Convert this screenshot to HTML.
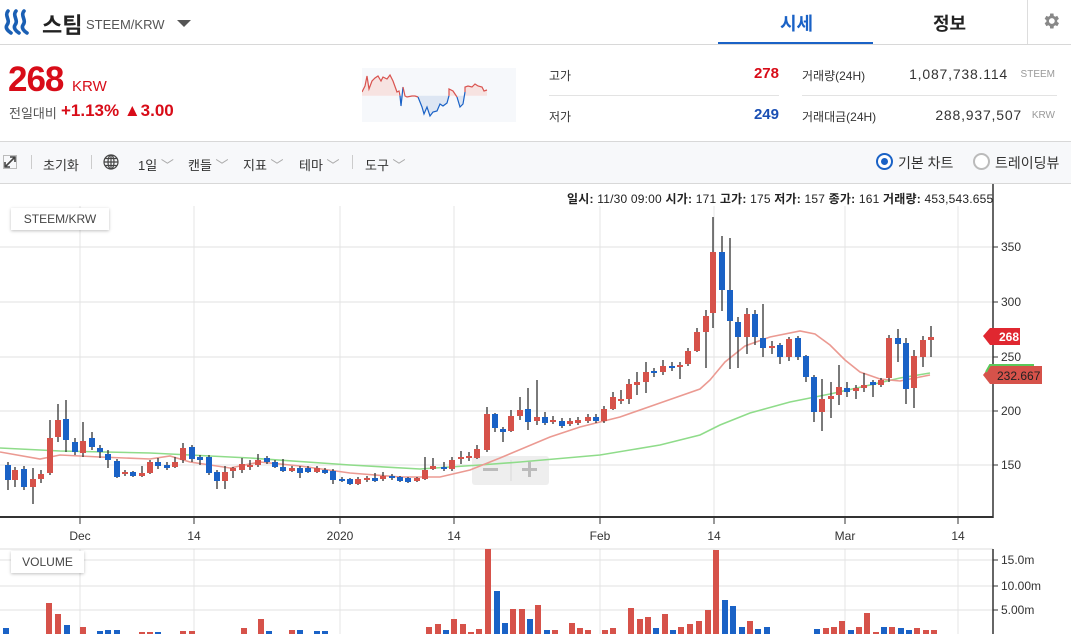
<!DOCTYPE html>
<html><head><meta charset="utf-8">
<style>
*{margin:0;padding:0;box-sizing:border-box}
body{width:1071px;height:634px;overflow:hidden;background:#fff;font-family:"Liberation Sans","Noto Sans CJK KR",sans-serif;color:#222;position:relative}
.a{position:absolute;white-space:nowrap}
</style></head><body>
<svg class="a" style="left:3px;top:8px" width="32" height="28" viewBox="0 0 32 28">
<g fill="none" stroke="#1a5fb4" stroke-width="3.6" stroke-linecap="round">
<path d="M5 3 C1 8 8 12 4 17 C2 20 5 23 8 25"/>
<path d="M13 3 C9 8 16 12 12 17 C10 20 13 23 16 25"/>
<path d="M21 3 C17 8 24 12 20 17 C18 20 21 23 24 25"/>
</g></svg>
<div class="a" style="left:42px;top:8px;font-size:22px;font-weight:bold;color:#222">스팀</div>
<div class="a" style="left:86px;top:17px;font-size:13px;color:#555">STEEM/KRW</div>
<div class="a" style="left:177px;top:20px;width:0;height:0;border-left:7px solid transparent;border-right:7px solid transparent;border-top:7px solid #555"></div>
<div class="a" style="left:780px;top:10px;font-size:18px;font-weight:bold;color:#1a62c6">시세</div>
<div class="a" style="left:933px;top:10px;font-size:18px;font-weight:bold;color:#222">정보</div>
<div class="a" style="left:718px;top:42px;width:155px;height:3px;background:#1a62c6"></div>
<div class="a" style="left:1027px;top:0;width:1px;height:44px;background:#ddd"></div>
<svg class="a" style="left:1041px;top:11px" width="20" height="20" viewBox="0 0 24 24"><path fill="#888" d="M19.4 13a7.5 7.5 0 0 0 0-2l2.1-1.6-2-3.5-2.5 1a7.5 7.5 0 0 0-1.7-1L15 3h-4l-.4 2.9a7.5 7.5 0 0 0-1.7 1l-2.5-1-2 3.5L6.5 11a7.5 7.5 0 0 0 0 2l-2.1 1.6 2 3.5 2.5-1a7.5 7.5 0 0 0 1.7 1L11 21h4l.4-2.9a7.5 7.5 0 0 0 1.7-1l2.5 1 2-3.5zM13 15.5a3.5 3.5 0 1 1 0-7 3.5 3.5 0 0 1 0 7z"/></svg>
<div class="a" style="left:0;top:44px;width:1071px;height:1px;background:#d8d8d8"></div>
<div class="a" style="left:8px;top:60px;font-size:35px;font-weight:bold;color:#d80c18;letter-spacing:-1px">268</div>
<div class="a" style="left:72px;top:78px;font-size:15px;color:#d80c18">KRW</div>
<div class="a" style="left:9px;top:103px;font-size:13px;color:#555">전일대비</div>
<div class="a" style="left:61px;top:101px;font-size:17px;font-weight:bold;color:#d80c18">+1.13% ▲3.00</div>
<svg class="a" style="left:362px;top:68px" width="154" height="54">
<rect width="154" height="54" fill="#f6f8fb"/>
<g transform="translate(-362,-68)">
<polygon points="362,92 365,86 367,76 369,89 372,81 375,78 378,76 381,81 383,77 387,79 390,75 393,81 397,92 399,95.7 362,95.7" fill="#f7e3e1"/>
<polygon points="449,95.7 449,89 453,91 457,95.7" fill="#f7e3e1"/>
<polygon points="465,95.7 465,87 468,86 472,87 475,84 478,86 482,87 484,91 487,90 487,95.7" fill="#f7e3e1"/>
<polygon points="399,95.7 401,106 403,95.7 405,96 407,97 412,96 415,96 418,97 422,107 424,114 427,107 430,116 433,112 437,111 440,104 443,106 447,103 449,95.7" fill="#dde6f3"/>
<polygon points="457,95.7 460,107 463,104 465,95.7" fill="#dde6f3"/>
<polyline points="362,92 365,86 367,76 369,89 372,81 375,78 378,76 381,81 383,77 387,79 390,75 393,81 397,92 399,91 400,95.7" fill="none" stroke="#d9534f" stroke-width="1.2"/>
<polyline points="400,95.7 401,106 403,87" fill="none" stroke="#1a62c6" stroke-width="1.2"/>
<polyline points="403,87 405,96 407,97 412,96 415,96 418,97" fill="none" stroke="#d9534f" stroke-width="1.2"/>
<polyline points="418,97 422,107 424,114 427,107 430,116 433,112 437,111 440,104 443,106 447,103 449,95.7" fill="none" stroke="#1a62c6" stroke-width="1.2"/>
<polyline points="449,95.7 449,89 453,91 457,97" fill="none" stroke="#d9534f" stroke-width="1.2"/>
<polyline points="457,97 460,107 463,104 465,92" fill="none" stroke="#1a62c6" stroke-width="1.2"/>
<polyline points="465,92 465,87 468,86 472,87 475,84 478,86 482,87 484,91 487,90" fill="none" stroke="#d9534f" stroke-width="1.2"/>
</g></svg>
<div class="a" style="left:549px;top:67px;font-size:12px;color:#333">고가</div>
<div class="a" style="left:720px;top:65px;font-size:15px;font-weight:bold;color:#d80c18;width:59px;text-align:right">278</div>
<div class="a" style="left:549px;top:95px;width:230px;height:1px;background:#e3e3e3"></div>
<div class="a" style="left:549px;top:108px;font-size:12px;color:#333">저가</div>
<div class="a" style="left:720px;top:106px;font-size:15px;font-weight:bold;color:#1a4fb4;width:59px;text-align:right">249</div>
<div class="a" style="left:802px;top:67px;font-size:12px;color:#333">거래량(24H)</div>
<div class="a" style="left:860px;top:66px;font-size:14px;color:#333;width:148px;text-align:right;letter-spacing:0.8px">1,087,738.114</div>
<div class="a" style="left:1012px;top:69px;font-size:10px;color:#999;width:43px;text-align:right">STEEM</div>
<div class="a" style="left:802px;top:95px;width:255px;height:1px;background:#e3e3e3"></div>
<div class="a" style="left:802px;top:108px;font-size:12px;color:#333">거래대금(24H)</div>
<div class="a" style="left:860px;top:107px;font-size:14px;color:#333;width:162px;text-align:right;letter-spacing:0.8px">288,937,507</div>
<div class="a" style="left:1012px;top:110px;font-size:10px;color:#999;width:43px;text-align:right">KRW</div>
<div class="a" style="left:0;top:141px;width:1071px;height:43px;background:#f7f8fa;border-top:1px solid #d8d8d8;border-bottom:1px solid #d8d8d8"></div>
<svg class="a" style="left:3px;top:155px" width="14" height="14" viewBox="0 0 14 14"><rect x="0.5" y="0.5" width="13" height="13" fill="none" stroke="#bbb"/><path d="M2 12 L12 2 M7 2 H12 V7 M2 7 V12 H7" stroke="#444" stroke-width="1.6" fill="none"/></svg>
<div class="a" style="left:31px;top:155px;width:1px;height:14px;background:#ccc"></div>
<div class="a" style="left:43px;top:155px;font-size:13px;color:#333">초기화</div>
<div class="a" style="left:91px;top:155px;width:1px;height:14px;background:#ccc"></div>
<svg class="a" style="left:103px;top:154px" width="16" height="16" viewBox="0 0 16 16"><g fill="none" stroke="#444" stroke-width="1.2"><circle cx="8" cy="8" r="7"/><ellipse cx="8" cy="8" rx="3" ry="7"/><path d="M1 8H15M2.5 4.5H13.5M2.5 11.5H13.5M8 1V15"/></g></svg>
<div class="a" style="left:138px;top:155px;font-size:13px;color:#333">1일<span style="color:#aaa"> ﹀</span></div>
<div class="a" style="left:188px;top:155px;font-size:13px;color:#333">캔들<span style="color:#aaa"> ﹀</span></div>
<div class="a" style="left:243px;top:155px;font-size:13px;color:#333">지표<span style="color:#aaa"> ﹀</span></div>
<div class="a" style="left:299px;top:155px;font-size:13px;color:#333">테마<span style="color:#aaa"> ﹀</span></div>
<div class="a" style="left:352px;top:155px;width:1px;height:14px;background:#ccc"></div>
<div class="a" style="left:365px;top:155px;font-size:13px;color:#333">도구<span style="color:#aaa"> ﹀</span></div>
<div class="a" style="left:876px;top:153px;width:17px;height:17px;border-radius:50%;border:2px solid #1a62c6;background:#fff"></div>
<div class="a" style="left:881px;top:158px;width:7px;height:7px;border-radius:50%;background:#1a62c6"></div>
<div class="a" style="left:898px;top:153px;font-size:14px;color:#333">기본 차트</div>
<div class="a" style="left:973px;top:153px;width:17px;height:17px;border-radius:50%;border:2px solid #bbb;background:#fff"></div>
<div class="a" style="left:995px;top:153px;font-size:14px;color:#333">트레이딩뷰</div>
<div class="a" style="left:567px;top:190px;font-size:12px;color:#222;letter-spacing:0.2px"><b>일시:</b> 11/30 09:00 <b>시가:</b> 171 <b>고가:</b> 175 <b>저가:</b> 157 <b>종가:</b> 161 <b>거래량:</b> 453,543.655</div>
<svg class="a" id="ch" style="left:0;top:0" width="1071" height="634"></svg>
<div class="a" style="left:11px;top:208px;width:98px;height:22px;background:#fff;box-shadow:0 1px 3px rgba(0,0,0,.25);font-size:12px;color:#444;text-align:center;line-height:22px">STEEM/KRW</div>
<div class="a" style="left:11px;top:551px;width:73px;height:22px;background:#fff;box-shadow:0 1px 3px rgba(0,0,0,.25);font-size:12px;color:#444;text-align:center;line-height:22px">VOLUME</div>
<script>
var s='';
function L(x1,y1,x2,y2,c,w){s+='<line x1="'+x1+'" y1="'+y1+'" x2="'+x2+'" y2="'+y2+'" stroke="'+c+'" stroke-width="'+(w||1)+'"/>';}
function T(x,y,t,o){s+='<text x="'+x+'" y="'+y+'" font-size="12" fill="#333" font-family="Liberation Sans,sans-serif" '+(o||'')+'>'+t+'</text>';}
[247,302,357,411,465].forEach(function(y){L(0,y,993,y,'#ececec',1.5);});
[560,586,610].forEach(function(y){L(0,y,993,y,'#ececec',1.5);});
[80,194,340,454,600,714,845,958].forEach(function(x){L(x,206,x,517,'#e4e4e4',1);L(x,549,x,634,'#e4e4e4',1);});
L(0,549,993,549,'#ddd',1);
L(0,517,993,517,'#333',2);
L(993,184,993,518,'#333',1.5);L(993,549,993,634,'#333',1.5);
[[80,'Dec'],[194,'14'],[340,'2020'],[454,'14'],[600,'Feb'],[714,'14'],[845,'Mar'],[958,'14']].forEach(function(a){L(a[0],517,a[0],524,'#333',1);T(a[0],540,a[1],'text-anchor="middle"');});
[[247,'350'],[302,'300'],[357,'250'],[411,'200'],[465,'150']].forEach(function(a){L(993,a[0],998,a[0],'#333',1);T(1001,a[0]+4,a[1]);});
[[560,'15.0m'],[586,'10.00m'],[610,'5.00m']].forEach(function(a){L(993,a[0],998,a[0],'#333',1);T(1001,a[0]+4,a[1],'font-size="11"');});
s+='<rect x="472" y="456" width="77" height="29" rx="3" fill="#ebebeb" opacity="0.85"/><line x1="511" y1="460" x2="511" y2="481" stroke="#d8d8d8"/><rect x="483" y="468" width="15" height="3" fill="#bbb"/><rect x="522" y="468" width="15" height="3" fill="#bbb"/><rect x="528" y="462" width="3" height="15" fill="#bbb"/>';
s+='<polyline fill="none" stroke="#8fdc8a" stroke-width="1.6" points="0,448 60,451 150,453 250,458 350,465 420,469 480,465 520,462 600,455 660,445 700,435 720,425 750,413 790,402 830,394 870,385 900,378 930,373"/>';
s+='<polyline fill="none" stroke="#eb9a92" stroke-width="1.6" points="0,452 40,459 60,455 100,457 150,459 170,456 190,462 230,468 260,462 300,466 350,473 400,477 440,477 470,470 500,458 550,437 580,427 620,417 660,403 700,389 710,380 725,362 745,346 770,337 800,331 815,334 830,345 845,360 860,372 880,379 900,381 915,378 930,375"/>';
var R='#d6524a',B='#1a62c6';
var c=[[8,B,465,480,462,490],[15,R,470,480,467,487],[24,B,469,487,466,490],[33,R,479,487,468,504],[41,R,474,479,470,483],[50,R,438,473,420,475],[58,R,420,437,404,442],[66,B,419,440,400,452],[75,B,442,452,438,455],[83,R,441,453,422,457],[92,B,438,447,432,450],[100,B,448,452,445,458],[108,B,454,460,450,468],[117,B,461,477,459,478],[125,R,472,474,470,476],[133,B,472,476,471,477],[142,R,473,476,466,477],[150,R,462,473,460,474],[158,B,462,466,458,469],[167,B,465,468,462,470],[175,R,462,467,457,468],[183,R,448,460,443,463],[192,B,447,459,445,462],[200,B,457,460,455,465],[209,B,457,473,455,475],[217,B,472,481,470,489],[225,R,472,481,466,489],[233,R,468,471,467,478],[242,R,464,470,458,473],[250,R,465,467,460,470],[258,R,460,465,454,467],[267,B,458,462,456,464],[275,B,462,467,460,468],[283,B,467,471,459,472],[292,R,468,471,466,472],[300,B,468,473,466,478],[308,B,468,472,466,473],[317,R,468,472,466,473],[325,B,470,473,468,474],[333,B,471,480,469,484],[342,B,479,481,477,482],[350,B,479,484,478,485],[358,R,479,484,477,485],[367,R,478,480,476,482],[375,B,478,481,473,482],[383,R,476,479,472,481],[392,B,476,478,474,480],[400,B,477,481,476,482],[408,B,478,482,477,483],[417,R,478,481,477,482],[425,R,470,479,457,480],[433,R,466,469,458,470],[444,B,467,469,462,471],[452,R,460,469,457,471],[461,R,457,459,451,464],[469,R,456,458,452,461],[477,R,449,458,445,459],[487,R,414,450,407,452],[495,B,414,428,413,432],[503,B,429,432,427,442],[511,R,416,431,410,432],[520,R,410,416,397,420],[528,B,409,422,388,430],[537,R,417,421,380,425],[545,B,417,423,412,425],[553,R,420,422,416,424],[562,B,421,426,418,428],[570,R,421,424,418,426],[578,R,420,423,417,425],[588,R,417,421,414,423],[596,B,417,421,414,423],[604,R,409,421,406,423],[613,R,397,409,392,410],[621,R,399,401,390,404],[629,R,384,399,379,404],[637,R,382,385,372,395],[646,R,372,382,362,393],[654,B,371,373,368,377],[663,R,366,372,360,375],[672,B,366,368,362,371],[680,R,365,367,362,379],[688,R,351,364,348,366],[697,R,332,351,328,352],[706,R,316,332,310,368],[713,R,252,313,217,328],[722,B,252,290,236,311],[730,B,290,321,238,369],[738,B,322,337,317,368],[747,R,314,337,308,354],[755,B,314,337,310,345],[763,B,338,348,304,357],[772,R,346,348,341,354],[780,B,345,357,343,364],[789,R,339,357,337,361],[798,B,338,357,336,360],[806,B,356,377,355,382],[814,B,377,412,375,422],[822,R,399,412,379,431],[831,R,396,399,382,418],[839,R,387,395,365,405],[847,B,388,392,382,397],[856,R,388,391,385,399],[864,R,385,388,373,392],[873,B,382,385,380,397],[881,R,380,385,378,387],[889,R,338,378,335,382],[898,B,338,344,329,362],[906,B,343,389,338,404],[914,R,356,388,350,408],[923,R,340,357,336,367],[931,R,337,340,326,357]];
c.forEach(function(d){L(d[0],d[4],d[0],d[5],'#333',1.3);s+='<rect x="'+(d[0]-3)+'" y="'+d[2]+'" width="6" height="'+Math.max(2,d[3]-d[2])+'" fill="'+d[1]+'"/>';});
var v={6:[628,B],49:[603,R],58:[614,R],67:[625,B],83:[627,R],244:[628,R],261:[619,R],269:[631,B],429:[627,R],438:[624,R],446:[630,B],454:[619,R],463:[624,R],471:[632,R],479:[629,R],488:[549,R],497:[591,B],505:[623,B],513:[609,R],522:[609,R],530:[619,B],538:[605,R],547:[630,B],555:[630,R],572:[623,R],580:[628,R],588:[630,R],605:[630,R],613:[628,R],631:[608,R],640:[619,R],648:[617,R],656:[628,B],665:[614,R],673:[630,B],681:[627,R],690:[624,R],699:[621,R],708:[610,R],716:[550,R],725:[600,B],733:[606,B],742:[627,B],750:[621,R],758:[629,B],767:[627,B],817:[629,B],826:[628,R],834:[627,R],842:[621,R],851:[630,B],859:[627,R],867:[613,R],876:[632,R],884:[627,B],892:[627,R],901:[628,B],909:[630,B],917:[628,R],926:[630,R],934:[630,R],100:[631,B],108:[630,B],117:[630,B],142:[632,R],150:[632,R],158:[632,B],183:[631,R],192:[631,R],292:[630,R],300:[630,B],317:[631,B],325:[631,B]};
for(var k in v){s+='<rect x="'+(k-3)+'" y="'+v[k][0]+'" width="6" height="'+(634-v[k][0])+'" fill="'+v[k][1]+'"/>';}
s+='<polygon points="983,336 990,328 1020,328 1020,345 990,345" fill="#e02730"/><text x="999" y="341" font-size="12" fill="#fff" font-weight="bold" font-family="Liberation Sans,sans-serif">268</text>';
s+='<polygon points="983,375 990,366 1042,366 1042,384 990,384" fill="#d6524a"/><path d="M986 372 L990 365 L1034 365" stroke="#5cc85a" stroke-width="2" fill="none"/><text x="997" y="380" font-size="12" fill="#222" font-family="Liberation Sans,sans-serif">232.667</text>';
document.getElementById('ch').innerHTML=s;
</script>
</body></html>
